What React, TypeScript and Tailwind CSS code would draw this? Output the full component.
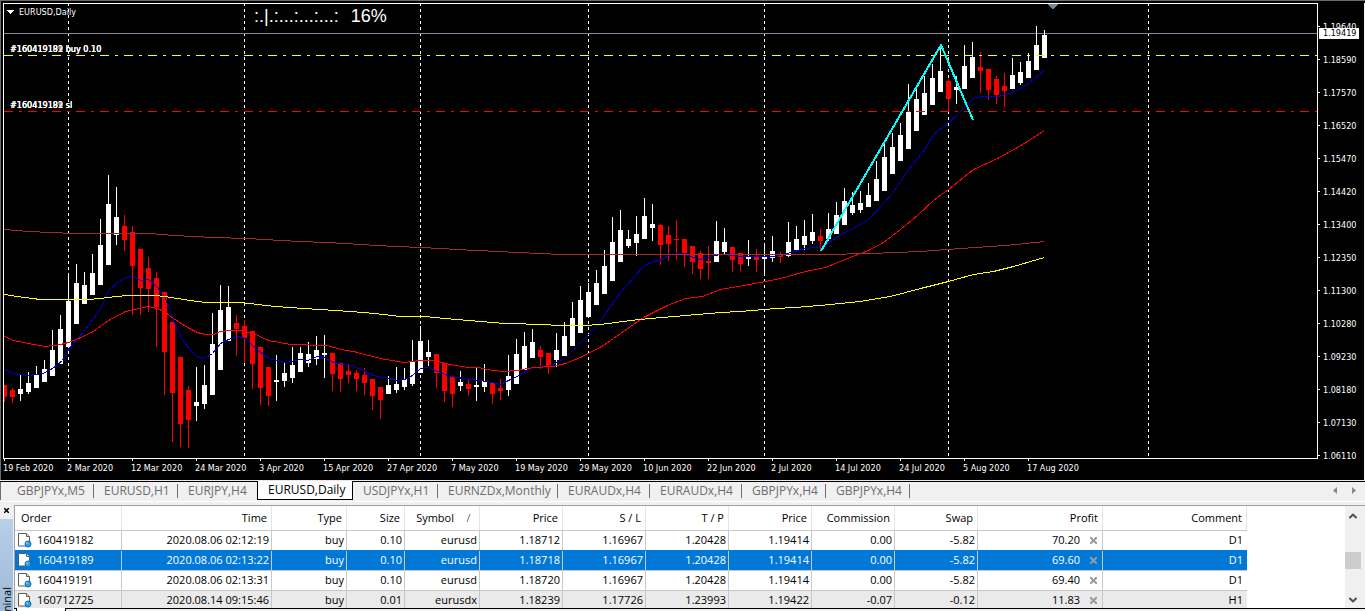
import { ChevronDown, ChevronUp } from 'lucide-react';

/**
 * Trading terminal: EURUSD daily chart, chart tabs and the open orders list
 */

// [high, body top, body bottom, low, 1 = bearish]
type Candle = [number, number, number, number, number];

const CANDLES: Candle[] = [
  [385, 385, 397, 402, 1], [388, 390, 397, 403, 1], [375, 389, 394, 401, 0], [372, 383, 392, 394, 0],
  [366, 374, 388, 388, 0], [360, 369, 382, 382, 0], [330, 350, 376, 376, 0], [315, 329, 364, 364, 0],
  [273, 301, 347, 348, 0], [264, 283, 324, 324, 0], [272, 285, 304, 304, 0], [254, 273, 295, 295, 0],
  [219, 245, 285, 285, 0], [175, 204, 265, 265, 0], [187, 217, 235, 245, 0], [215, 226, 240, 251, 1],
  [226, 232, 266, 315, 1], [249, 249, 288, 315, 1], [257, 268, 289, 312, 1], [272, 278, 307, 347, 1],
  [292, 292, 352, 395, 1], [322, 322, 393, 442, 1], [357, 357, 424, 447, 1], [386, 390, 420, 448, 1],
  [367, 402, 406, 421, 0], [365, 385, 404, 409, 0], [313, 344, 395, 395, 0], [285, 310, 370, 370, 0],
  [286, 307, 341, 341, 0], [315, 323, 329, 356, 1], [320, 326, 338, 363, 1], [331, 331, 364, 389, 1],
  [347, 347, 388, 405, 1], [367, 367, 396, 406, 1], [355, 380, 382, 401, 0], [363, 373, 381, 387, 0],
  [347, 365, 378, 383, 0], [347, 353, 372, 372, 0], [342, 354, 363, 367, 0], [336, 350, 359, 365, 0],
  [335, 353, 355, 378, 0], [353, 353, 374, 391, 1], [363, 363, 379, 392, 1], [364, 371, 375, 383, 1],
  [370, 373, 379, 391, 1], [368, 375, 383, 395, 1], [379, 379, 396, 410, 1], [387, 387, 400, 419, 1],
  [376, 385, 394, 394, 0], [367, 384, 390, 393, 0], [368, 379, 387, 390, 0], [340, 362, 384, 386, 0],
  [326, 341, 373, 373, 0], [340, 352, 357, 366, 0], [354, 354, 373, 388, 1], [363, 363, 391, 402, 1],
  [377, 377, 394, 407, 1], [371, 382, 386, 391, 0], [380, 384, 389, 396, 1], [368, 385, 387, 401, 0],
  [364, 381, 387, 392, 0], [383, 383, 394, 404, 1], [379, 388, 391, 400, 1], [355, 376, 390, 396, 0],
  [339, 354, 384, 384, 0], [332, 346, 370, 370, 0], [329, 342, 358, 358, 0], [346, 350, 357, 369, 1],
  [353, 353, 367, 374, 1], [333, 350, 360, 367, 0], [322, 336, 356, 356, 0], [302, 318, 346, 346, 0],
  [286, 300, 333, 333, 0], [283, 292, 317, 318, 0], [270, 283, 305, 305, 0], [250, 266, 294, 294, 0],
  [217, 242, 281, 281, 0], [210, 230, 262, 262, 0], [230, 239, 246, 248, 0], [216, 234, 243, 256, 0],
  [198, 216, 239, 239, 0], [204, 224, 228, 241, 0], [224, 225, 245, 265, 1], [226, 235, 244, 261, 1],
  [220, 239, 240, 260, 1], [239, 239, 253, 267, 1], [246, 246, 262, 274, 1], [251, 253, 269, 279, 1],
  [246, 261, 263, 279, 1], [221, 241, 262, 262, 0], [228, 242, 252, 254, 0], [247, 247, 260, 272, 1],
  [253, 253, 264, 271, 1], [240, 257, 259, 266, 0], [249, 257, 260, 272, 1], [244, 257, 259, 275, 0],
  [236, 251, 258, 262, 0], [252, 255, 257, 263, 1], [222, 242, 256, 257, 0], [226, 239, 250, 251, 0],
  [220, 236, 245, 250, 0], [214, 232, 241, 244, 0], [229, 236, 241, 250, 1], [213, 229, 239, 241, 0],
  [202, 215, 234, 234, 0], [188, 201, 225, 225, 0], [192, 205, 213, 215, 0], [191, 203, 210, 213, 0],
  [183, 195, 207, 207, 0], [161, 179, 201, 201, 0], [141, 157, 191, 191, 0], [133, 147, 174, 174, 0],
  [123, 135, 161, 161, 0], [84, 112, 149, 149, 0], [87, 99, 131, 131, 0], [76, 93, 115, 115, 0],
  [64, 78, 105, 105, 0], [46, 71, 92, 92, 0], [79, 81, 99, 111, 1], [76, 87, 90, 104, 0],
  [45, 66, 89, 89, 0], [42, 57, 78, 78, 0], [52, 67, 71, 93, 1], [69, 69, 90, 100, 1],
  [76, 79, 95, 104, 1], [73, 86, 91, 107, 1], [58, 75, 89, 89, 0], [62, 72, 83, 85, 0],
  [53, 61, 78, 78, 0], [26, 45, 70, 70, 0], [30, 35, 58, 58, 0],
];

const AVERAGES = [
  {
    color: '#0000cd',
    points:
      '4,369 13,373 28,375 43,373 52,368 62,360 68,349 77,338 85,329 93,318 101,307 108,290 117,282 125,277 132,276 141,280 148,279 157,287 165,298 172,317 180,336 189,349 196,356 204,358 212,353 220,343 228,339 238,336 245,338 253,346 268,358 285,362 300,359 307,360 317,356 324,357 333,362 353,366 363,370 373,375 383,377 397,380 405,379 412,375 420,368 428,367 437,371 450,376 470,379 487,381 500,384 508,380 517,376 532,367 548,366 557,362 565,357 580,342 597,325 605,313 620,292 633,277 643,266 650,262 662,259 670,254 680,253 690,256 700,259 713,255 723,254 740,256 773,256 787,253 805,248 823,246 842,233 853,228 868,219 883,203 892,193 908,169 925,148 933,134 947,123 958,113 973,98 980,96 998,96 1012,92 1028,83 1044,70',
  },
  {
    color: '#ff0000',
    points:
      '4,336 13,340 28,343 45,346 60,344 68,342 78,338 93,331 108,320 125,311 148,306 157,308 165,312 173,318 187,327 197,332 205,334 213,334 220,331 230,330 240,330 253,333 268,340 290,344 327,345 340,349 353,351 380,358 403,362 420,360 433,360 450,364 467,367 478,367 487,369 502,371 517,370 533,367 553,366 565,363 580,357 603,345 620,333 643,317 667,305 685,298 702,296 720,289 743,285 765,281 780,278 805,271 825,267 837,262 852,256 868,250 883,242 900,229 917,215 933,200 948,189 973,169 997,158 1017,147 1030,139 1044,130',
  },
  {
    color: '#ffff00',
    points:
      '4,294 16,296 40,299 88,299 100,298 115,296 128,295 155,295 164,296 190,300 205,302 240,302 275,306 304,308 350,311 374,313 400,316 424,316 445,318 480,321 505,323 545,324 555,325 583,325 600,324 630,320 650,318 685,315 720,312 740,311 775,308 795,307 830,304 860,301 890,296 920,288 948,281 973,274 993,271 1013,266 1044,257',
  },
  {
    color: '#a52a2a',
    points:
      '4,229 28,231 50,232 75,233 150,233 160,234 175,235 192,236 215,237 245,238 265,239 280,240 300,241 325,242 345,243 360,244 376,245 397,246 420,247 440,248 456,249 477,250 497,251 517,252 540,253 560,254 823,254 871,253 895,252 920,251 960,248 990,246 1016,244 1044,241',
  },
];

const MONTH_LINES = [68, 244, 420, 588, 764, 948, 1148];

const PRICES = [
  '1.19640', '1.18590', '1.17570', '1.16520', '1.15470', '1.14420', '1.13400',
  '1.12350', '1.11300', '1.10280', '1.09230', '1.08180', '1.07130', '1.06110',
];

const DATES = [
  '19 Feb 2020', '2 Mar 2020', '12 Mar 2020', '24 Mar 2020', '3 Apr 2020', '15 Apr 2020',
  '27 Apr 2020', '7 May 2020', '19 May 2020', '29 May 2020', '10 Jun 2020', '22 Jun 2020',
  '2 Jul 2020', '14 Jul 2020', '24 Jul 2020', '5 Aug 2020', '17 Aug 2020',
];

const CHART_TABS = [
  { label: 'GBPJPYx,M5', width: 'w-[93px] pl-4' },
  { label: 'EURUSD,H1', width: 'w-[84px] pl-[10px]' },
  { label: 'EURJPY,H4', width: 'w-[79px] pl-[10px]' },
  { label: 'EURUSD,Daily', width: 'w-[96px] pl-[10px]', active: true },
  { label: 'USDJPYx,H1', width: 'w-[85px] pl-[10px]' },
  { label: 'EURNZDx,Monthly', width: 'w-[120px] pl-[10px]' },
  { label: 'EURAUDx,H4', width: 'w-[92px] pl-[10px]' },
  { label: 'EURAUDx,H4', width: 'w-[92px] pl-[10px]' },
  { label: 'GBPJPYx,H4', width: 'w-[84px] pl-[10px]' },
  { label: 'GBPJPYx,H4', width: 'w-[84px] pl-[10px]' },
];

const COLUMNS = [
  { label: 'Order', width: 'w-[107px]' },
  { label: 'Time', width: 'w-[150px]' },
  { label: 'Type', width: 'w-[75px]' },
  { label: 'Size', width: 'w-[58px]' },
  { label: 'Symbol', width: 'w-[75px]' },
  { label: 'Price', width: 'w-[83px]' },
  { label: 'S / L', width: 'w-[83px]' },
  { label: 'T / P', width: 'w-[83px]' },
  { label: 'Price', width: 'w-[83px]' },
  { label: 'Commission', width: 'w-[83px]' },
  { label: 'Swap', width: 'w-[83px]' },
  { label: 'Profit', width: 'w-[125px]' },
  { label: 'Comment', width: 'w-[144px]' },
];

const ORDERS = [
  {
    id: '160419182',
    cells: ['2020.08.06 02:12:19', 'buy', '0.10', 'eurusd', '1.18712', '1.16967', '1.20428', '1.19414', '0.00', '-5.82'],
    profit: '70.20',
    comment: 'D1',
    look: 'bg-white border-[#c8c8c8]',
  },
  {
    id: '160419189',
    cells: ['2020.08.06 02:13:22', 'buy', '0.10', 'eurusd', '1.18718', '1.16967', '1.20428', '1.19414', '0.00', '-5.82'],
    profit: '69.60',
    comment: 'D1',
    look: 'bg-[#0078d7] text-white border-[#0078d7]',
  },
  {
    id: '160419191',
    cells: ['2020.08.06 02:13:31', 'buy', '0.10', 'eurusd', '1.18720', '1.16967', '1.20428', '1.19414', '0.00', '-5.82'],
    profit: '69.40',
    comment: 'D1',
    look: 'bg-white border-[#c8c8c8]',
  },
  {
    id: '160712725',
    cells: ['2020.08.14 09:15:46', 'buy', '0.01', 'eurusdx', '1.18239', '1.17726', '1.23993', '1.19422', '-0.07', '-0.12'],
    profit: '11.83',
    comment: 'H1',
    look: 'bg-[#eaeaea] border-[#c8c8c8]',
  },
];

function CandleChart() {
  return (
    <svg className="absolute inset-0 h-full w-full" shapeRendering="crispEdges" aria-label="EURUSD daily candles">
      <g transform="translate(-4 -4)">
        {MONTH_LINES.map((x) => (
          <line key={x} x1={x + 0.5} x2={x + 0.5} y1="3" y2="458" stroke="#fff" strokeDasharray="3 3" />
        ))}
        <line x1="4" x2="1317" y1="33.5" y2="33.5" stroke="#778899" />
        {CANDLES.map(([high, top, bottom, low, down], i) => {
          const x = 4 + i * 8;
          return (
            <g key={x} fill={down ? '#ff0000' : '#ffffff'}>
              <rect x={x} y={high} width="1" height={low - high} />
              <rect x={x - 2} y={top} width="5" height={bottom - top} />
            </g>
          );
        })}
        <line x1="4" x2="1317" y1="55.5" y2="55.5" stroke="#ffff00" strokeDasharray="9 6 3 6" />
        <line x1="4" x2="1317" y1="111.5" y2="111.5" stroke="#ff0000" strokeDasharray="9 6 3 6" />
        <g transform="translate(.5 .5)" fill="none">
          {AVERAGES.map(({ color, points }) => (
            <polyline key={color} points={points} stroke={color} />
          ))}
        </g>
        <polyline points="821,251 941,45 973,120" fill="none" stroke="#00ffff" strokeWidth="2" />
        <path d="M1047 4h11l-5.500 5.500z" fill="#778899" />
        <path d="M7 10h7l-3.500 4z" fill="#fff" />
      </g>
    </svg>
  );
}

// Orders placed at the same level print their labels on top of each other
function LevelLabel({ suffix, top }: { suffix: string; top: string }) {
  return (
    <div className={`absolute left-[6px] grid leading-3 ${top}`}>
      <span className="col-start-1 row-start-1">#160419182 {suffix}</span>
      <span className="col-start-1 row-start-1">#160419189 {suffix}</span>
      <span className="col-start-1 row-start-1">#160419191 {suffix}</span>
    </div>
  );
}

function ChartWindow() {
  return (
    <section className="flex border-l border-t border-[#6b6b6b] bg-black pl-[2px] pt-[2px] font-['DejaVu_Sans_Condensed','Open_Sans',sans-serif] text-[9px] text-white">
      <div className="min-w-0 flex-1">
        <div className="relative h-[456px] overflow-hidden border border-white">
          <CandleChart />
          <h1 className="absolute left-[15px] top-[2px] leading-3">EURUSD,Daily</h1>
          <p className="absolute left-[250px] top-[1px] flex gap-3 font-['Liberation_Sans',sans-serif] text-[18px] leading-[22px]">
            <span>:.|.:...:...:...:</span>
            <span>16%</span>
          </p>
          <LevelLabel suffix="buy 0.10" top="top-[39px]" />
          <LevelLabel suffix="sl" top="top-[95px]" />
        </div>
        <div className="flex h-[21px] pl-px">
          {DATES.map((date) => (
            <div key={date} className="w-16 shrink-0 whitespace-nowrap leading-[14px]">
              <div className="h-[2px] w-px bg-white" />
              <span className="-ml-px block">{date}</span>
            </div>
          ))}
        </div>
      </div>

      <div className="relative w-[47px] border-r border-[#f0f0f0] pt-[7px]">
        {PRICES.map((price) => (
          <div key={price} className="flex h-[33px] items-center gap-[3px] leading-3">
            <span className="h-px w-[2px] bg-white" />
            {price}
          </div>
        ))}
        <div className="absolute left-[1px] top-[25px] bg-white pl-1 pr-[3px] leading-[11px] text-black">
          1.19419
        </div>
      </div>
    </section>
  );
}

function ChartTabs() {
  return (
    <nav className="flex h-[24px] shrink-0 border-t border-black">
      <div className="flex h-[20px] flex-1 border-b border-b-white">
        <span className="h-[18px] w-px bg-[#6d6d6d]" />
        {CHART_TABS.map(({ label, width, active }, i) =>
          active ? (
            <button
              key={i}
              className={`-mt-px h-[19px] border border-t-0 border-black bg-white text-left text-[12px] leading-4 ${width}`}
            >
              {label}
            </button>
          ) : (
            <button key={i} className={`flex h-[18px] items-center text-left text-[12px] text-[#6d6d6d] ${width}`}>
              <span className="flex-1">{label}</span>
              {!CHART_TABS[i + 1]?.active && <span className="h-[14px] w-px bg-[#6d6d6d]" />}
            </button>
          ),
        )}
        <div className="ml-auto flex h-[17px] items-center gap-[15px] pr-[9px] text-[#8a8a8a]">
          <button aria-label="Previous tabs">
            <svg width="4" height="7" fill="currentColor"><path d="M4 0v7L0 3.500z" /></svg>
          </button>
          <button aria-label="Next tabs">
            <svg width="4" height="7" fill="currentColor"><path d="M0 0v7l4-3.500z" /></svg>
          </button>
        </div>
      </div>
    </nav>
  );
}

function OrderIcon() {
  return (
    <svg width="15" height="16" viewBox="0 0 15 16" className="shrink-0">
      <path d="M1.500 1.500h8l3 3v9.500h-11z" fill="#fff" stroke="#5c5c5c" />
      <path d="M9.500 1.500v3h3" fill="#ddd" stroke="#5c5c5c" />
      <circle cx="11" cy="12" r="3" fill="#2f9fe8" stroke="#0f6fb5" />
      <circle cx="10" cy="11" r="1" fill="#7cc8f7" />
    </svg>
  );
}

function OrdersTable() {
  return (
    <table className="w-[1232px] table-fixed border-separate border-spacing-0 whitespace-nowrap text-right text-[11px] leading-4">
      <thead>
        <tr>
          {COLUMNS.map(({ label, width }, i) => (
            <th
              key={i}
              className={`h-6 border-r border-[#e5e5e5] p-0 font-normal ${width} ${i === 0 ? 'pl-[6px] text-left' : 'pr-1'}`}
            >
              {label === 'Symbol' ? (
                <span className="flex items-center justify-end gap-3 pr-1">
                  {label}
                  <svg width="5" height="8" fill="none" stroke="#777"><path d="M1 8l3-8" /></svg>
                </span>
              ) : (
                label
              )}
            </th>
          ))}
        </tr>
      </thead>
      <tbody>
        {ORDERS.map(({ id, cells, profit, comment, look }) => (
          <tr key={id}>
            <td className={`h-5 border-t p-0 ${look}`}>
              <span className="flex h-[19px] items-center gap-[5px] border-r border-[#c8c8c8] pb-px pl-[2px]">
                <OrderIcon />
                {id}
              </span>
            </td>
            {cells.map((cell, i) => (
              <td key={i} className={`border-t p-0 ${look}`}>
                <span className="block h-[19px] border-r border-[#c8c8c8] pr-[2px] leading-[17px]">{cell}</span>
              </td>
            ))}
            <td className={`border-t p-0 ${look}`}>
              <span className="flex h-[19px] items-center justify-end gap-[10px] border-r border-[#c8c8c8] pb-px pr-[5px]">
                {profit}
                <button aria-label={`Close order ${id}`} className="text-[#9a9a9a]">
                  <svg width="7" height="7" stroke="currentColor" strokeWidth="2"><path d="M0 0l7 7M7 0L0 7" /></svg>
                </button>
              </span>
            </td>
            <td className={`border-t p-0 pr-1 ${look}`}>
              <span className="block h-[19px] leading-[17px]">{comment}</span>
            </td>
          </tr>
        ))}
      </tbody>
    </table>
  );
}

function TerminalPanel() {
  return (
    <section className="flex min-h-0 flex-1 overflow-hidden">
      <aside className="flex w-[14px] shrink-0 flex-col pr-px">
        <button aria-label="Close terminal" className="flex h-[14px] items-center justify-center pb-[3px]">
          <svg width="5" height="5" stroke="#000" strokeWidth="1.500"><path d="M0 0l5 5M5 0L0 5" /></svg>
        </button>
        <div className="min-h-0 flex-1 overflow-hidden bg-linear-to-b from-[#b9cfea] to-[#9db8d6] pt-[68px]">
          <span className="block rotate-180 text-[11px] leading-[13px] [writing-mode:vertical-rl]">Terminal</span>
        </div>
      </aside>

      <div className="flex min-w-0 flex-1 flex-col">
        <div className="flex min-h-0 flex-1 overflow-hidden border-l border-t border-[#a0a0a0] bg-white">
          <div className="min-w-0 flex-1 overflow-hidden">
            <OrdersTable />
          </div>
          <div className="flex w-4 flex-col items-center justify-between bg-[#f0f0f0] pb-[2px] pt-1 text-[#505050]">
            <ChevronUp size={12} strokeWidth={4} />
            <div className="mt-1 h-[17px] w-full bg-[#cdcdcd]" />
            <ChevronDown size={12} strokeWidth={4} />
          </div>
          <div className="w-1 bg-[#f0f0f0]" />
        </div>
        <div className="h-[3px] border-t border-black pl-[2px]">
          <div className="-mt-px h-[3px] w-[50px] border-x border-black bg-white" />
        </div>
      </div>
    </section>
  );
}

export default function App() {
  return (
    <main className="flex h-screen flex-col overflow-hidden bg-[#f0f0f0] font-['Open_Sans','Noto_Sans',sans-serif] text-black">
      <ChartWindow />
      <div className="h-px shrink-0 bg-[#f0e6ea]" />
      <ChartTabs />
      <TerminalPanel />
    </main>
  );
}
